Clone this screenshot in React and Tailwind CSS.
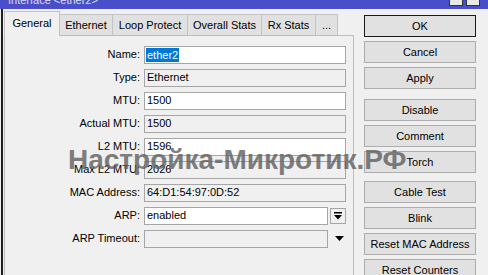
const tabs = [
  { name: 'General', w: 'w-[56px]', active: true },
  { name: 'Ethernet', w: 'w-[53px]' },
  { name: 'Loop Protect', w: 'w-[75px]' },
  { name: 'Overall Stats', w: 'w-[74px]' },
  { name: 'Rx Stats', w: 'w-[54px]' },
  { name: '...', w: 'w-[22px]' },
];

const fields = [
  { label: 'Name', value: 'ether2', edit: true, selected: true },
  { label: 'Type', value: 'Ethernet' },
  { label: 'MTU', value: '1500', edit: true },
  { label: 'Actual MTU', value: '1500' },
  { label: 'L2 MTU', value: '1596', edit: true },
  { label: 'Max L2 MTU', value: '2026' },
  { label: 'MAC Address', value: '64:D1:54:97:0D:52' },
  { label: 'ARP', value: 'enabled', edit: true, kind: 'select' },
  { label: 'ARP Timeout', value: '', kind: 'drop' },
];

const buttonGroups = [
  { gap: 'mt-[6px]', items: ['OK', 'Cancel', 'Apply'] },
  { gap: 'mt-[10px]', items: ['Disable', 'Comment', 'Torch'] },
  { gap: 'mt-[8px]', items: ['Cable Test', 'Blink', 'Reset MAC Address', 'Reset Counters'] },
];

function Field({ field }) {
  const box = field.edit ? 'bg-white' : 'bg-[#f0f0f0]';
  const narrow = field.kind ? 'w-[184px]' : 'w-[202px]';

  return (
    <div className="flex items-center h-[23px]">
      <div className="w-[135px] text-right">{field.label}:</div>
      <div className={`ml-[4px] h-[18px] ${narrow} ${box} border border-[#a6a6a6] flex items-center pl-[1px]`}>
        {field.selected ? (
          <span className="bg-[#0078d7] text-white px-[1px] leading-[14px]">{field.value}</span>
        ) : (
          <span className="px-[1px]">{field.value}</span>
        )}
      </div>
      {field.kind === 'select' && (
        <div className="ml-[2px] w-[16px] h-[16px] border border-[#a6a6a6] bg-[#f0f0f0] flex items-center justify-center">
          <svg width="8" height="8" viewBox="0 0 8 8">
            <rect x="0" y="0" width="8" height="1.5" fill="#000" />
            <path d="M0 3 L8 3 L4 7.5 Z" fill="#000" />
          </svg>
        </div>
      )}
      {field.kind === 'drop' && (
        <div className="ml-[6px] w-[10px] flex items-center justify-center">
          <svg width="9" height="5" viewBox="0 0 9 5">
            <path d="M0 0 L9 0 L4.5 5 Z" fill="#000" />
          </svg>
        </div>
      )}
    </div>
  );
}

export default function App() {
  return (
    <div className="relative w-[488px] h-[275px] overflow-hidden bg-[#f0f0f0] flex flex-col text-[11px] text-black font-['Liberation_Sans',Arial,sans-serif]">
      <div className="h-[9px] shrink-0 bg-[#4a4fc9] flex overflow-hidden">
        <span className="ml-[8px] mt-[-5px] leading-[11px] text-[#dcdcf5]">Interface &lt;ether2&gt;</span>
        <div className="ml-auto mr-[8px] flex gap-[3px] mt-[-8px]">
          <div className="w-[14px] h-[14px] bg-[#e8e8e8] border border-[#333]" />
          <div className="w-[14px] h-[14px] bg-[#e8e8e8] border border-[#333]" />
        </div>
      </div>

      <div className="flex-1 flex ml-[1px] border-l-2 border-[#1e1e1e] pl-[1px]">
        <div className="w-[350px] flex flex-col">
          <div className="h-[26px] flex items-end">
            {tabs.map((tab) =>
              tab.active ? (
                <div
                  key={tab.name}
                  className={`${tab.w} h-[25px] -mb-[1px] relative z-10 bg-[#f0f0f0] border border-b-0 border-[#c4c4c4] flex items-center justify-center pb-[2px]`}
                >
                  {tab.name}
                </div>
              ) : (
                <div
                  key={tab.name}
                  className={`${tab.w} h-[21px] bg-[#e1e1e1] border border-b-0 border-l-0 border-[#c4c4c4] flex items-center justify-center`}
                >
                  {tab.name}
                </div>
              )
            )}
          </div>
          <div className="flex-1 border border-b-0 border-[#bdbdbd] pt-[7px]">
            {fields.map((field) => (
              <Field key={field.label} field={field} />
            ))}
          </div>
        </div>

        <div className="ml-[10px] w-[112px] flex flex-col">
          {buttonGroups.map((group) => (
            <div key={group.items[0]} className={`${group.gap} flex flex-col gap-[4px]`}>
              {group.items.map((label) => (
                <div
                  key={label}
                  className={`h-[22px] shrink-0 flex items-center justify-center bg-[#e1e1e1] border ${
                    label === 'OK' ? 'border-[#1a1a1a]' : 'border-[#adadad]'
                  }`}
                >
                  {label}
                </div>
              ))}
            </div>
          ))}
        </div>
      </div>

      <div className="absolute left-[68px] top-[146px] text-[28px] leading-[28px] font-bold text-[#606060] opacity-80 whitespace-nowrap pointer-events-none">
        Настройка-Микротик.РФ
      </div>
    </div>
  );
}
